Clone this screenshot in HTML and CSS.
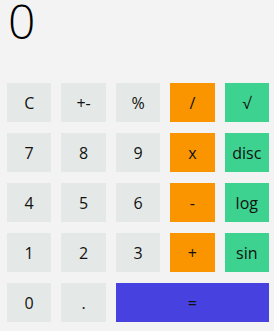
FILE: index.html
```html
<!DOCTYPE html>
<html>
<head>
<meta charset="utf-8">
<link rel="stylesheet" href="styles.css">
</head>
<body>
<div class="calc">
  <div class="display">0</div>
  <div class="keys">
    <div class="key">C</div>
    <div class="key">+-</div>
    <div class="key">%</div>
    <div class="key op">/</div>
    <div class="key fn">√</div>
    <div class="key">7</div>
    <div class="key">8</div>
    <div class="key">9</div>
    <div class="key op">x</div>
    <div class="key fn">disc</div>
    <div class="key">4</div>
    <div class="key">5</div>
    <div class="key">6</div>
    <div class="key op">-</div>
    <div class="key fn">log</div>
    <div class="key">1</div>
    <div class="key">2</div>
    <div class="key">3</div>
    <div class="key op">+</div>
    <div class="key fn">sin</div>
    <div class="key">0</div>
    <div class="key">.</div>
    <div class="key eq">=</div>
  </div>
</div>
</body>
</html>
```
FILE: styles.css
```css
html, body {
  margin: 0;
  padding: 0;
  background: #f3f3f3;
}
body {
  font-family: "Open Sans", "DejaVu Sans", sans-serif;
  color: #111;
}
.calc {
  width: 274px;
  height: 331px;
  padding: 0 5px 0 7px;
  box-sizing: border-box;
}
.display {
  height: 83px;
  font-size: 48px;
  line-height: 42px;
  padding-left: 1px;
  font-weight: 300;
  color: #000;
}
.keys {
  display: grid;
  grid-template-columns: repeat(5, 1fr);
  grid-auto-rows: 39px;
  column-gap: 10px;
  row-gap: 11px;
}
.key {
  display: flex;
  align-items: center;
  justify-content: center;
  background: #e4e9e7;
  font-size: 16px;
}
.op { background: #fa9500; }
.fn { background: #3dd28f; }
.eq { background: #4741e0; grid-column: span 3; }
```
